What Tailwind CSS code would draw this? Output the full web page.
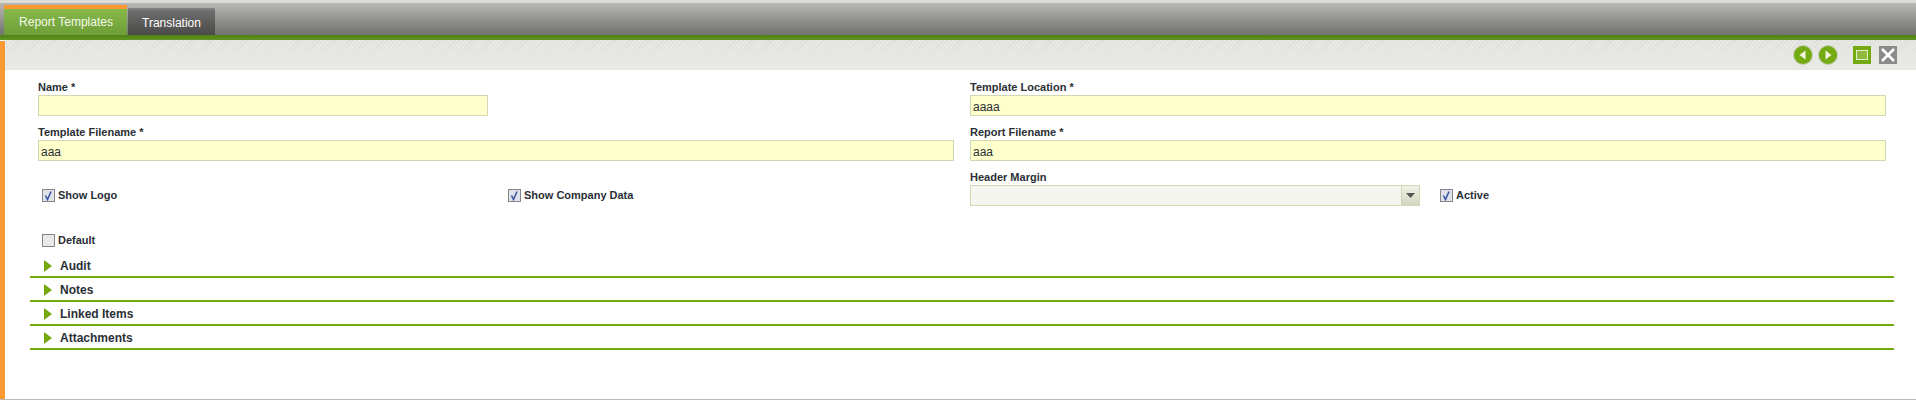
<!DOCTYPE html>
<html lang="en">
<head>
  <meta charset="UTF-8">
  <title>Report Templates</title>
  <script src="https://cdn.jsdelivr.net/npm/@tailwindcss/browser@4"></script>
</head>
<body class="bg-white h-[400px] overflow-hidden font-['Liberation_Sans',Arial,sans-serif] text-[#2a2f36]">

  <!-- tab bar -->
  <div class="h-[3px] bg-[#dcdcd4]"></div>
  <div class="h-[32px] pl-1 flex items-end gap-px bg-gradient-to-b from-[#b8b7b3] to-[#727270]">
    <div class="h-[30px] w-[123px] border-t-4 border-[#fb9a33] bg-[#7cb042] bg-gradient-to-b from-[#86b84a] to-[#6e9f38] text-[#f4f9e8] text-xs flex items-center justify-center pb-px pl-px">Report Templates</div>
    <div class="h-[27px] w-[87px] border-t-2 border-[#808080] bg-gradient-to-b from-[#6e6e6c] to-[#4a4a48] text-white text-xs flex items-center justify-center">Translation</div>
  </div>
  <div class="h-[5px] bg-gradient-to-b from-[#4f8214] to-[#5f9620]"></div>

  <div class="flex h-[360px] border-b border-[#bbbbbb]">
    <div class="w-[5px] mt-px bg-[#fb9a33]"></div>
    <div class="flex-1 min-w-0">

      <!-- toolbar -->
      <div class="h-[30px] pr-[19px] flex items-center justify-end bg-[linear-gradient(to_bottom,transparent,#e8e9e4_70%),repeating-linear-gradient(135deg,#dbdbd7_0,#dbdbd7_1px,#e8e9e4_1px,#e8e9e4_3px)]">
        <svg class="w-5 h-5" viewBox="0 0 20 20"><circle cx="10" cy="10" r="10" fill="#c3cbb0"/><circle cx="10" cy="10" r="9" fill="#74ab12"/><path d="M12.500 5.500v9L6.500 10z" fill="#f1f6e4"/></svg>
        <svg class="w-5 h-5 ml-[5px]" viewBox="0 0 20 20"><circle cx="10" cy="10" r="10" fill="#c3cbb0"/><circle cx="10" cy="10" r="9" fill="#74ab12"/><path d="M7.500 5.500v9l6-4.500z" fill="#f1f6e4"/></svg>
        <svg class="w-[18px] h-[18px] ml-[15px]" viewBox="0 0 18 18"><rect width="18" height="18" fill="#74ab12"/><rect x="3.500" y="4.500" width="11" height="9" fill="#8fbb3d" stroke="#e3efc8" stroke-width="1"/></svg>
        <svg class="w-[18px] h-[18px] ml-2" viewBox="0 0 18 18"><rect width="18" height="18" fill="#8a8a8a"/><path d="M3 3l12 12M15 3L3 15" stroke="#fff" stroke-width="2.500"/></svg>
      </div>

      <!-- form -->
      <div class="pl-[33px] pt-[11px] grid grid-cols-[repeat(4,450px)] gap-x-4 auto-rows-[45px] text-[11px] font-bold">
        <div>
          <label class="block h-[14px] leading-[12px]">Name *</label>
          <input class="block w-full h-[21px] border border-[#d3d8b4] bg-[#ffffcc] px-[2px] pt-[2px] text-xs font-normal" value="">
        </div>
        <div></div>
        <div class="col-span-2">
          <label class="block h-[14px] leading-[12px]">Template Location *</label>
          <input class="block w-full h-[21px] border border-[#d3d8b4] bg-[#ffffcc] px-[2px] pt-[2px] text-xs font-normal" value="aaaa">
        </div>

        <div class="col-span-2">
          <label class="block h-[14px] leading-[12px]">Template Filename *</label>
          <input class="block w-full h-[21px] border border-[#d3d8b4] bg-[#ffffcc] px-[2px] pt-[2px] text-xs font-normal" value="aaa">
        </div>
        <div class="col-span-2">
          <label class="block h-[14px] leading-[12px]">Report Filename *</label>
          <input class="block w-full h-[21px] border border-[#d3d8b4] bg-[#ffffcc] px-[2px] pt-[2px] text-xs font-normal" value="aaa">
        </div>

        <div class="flex items-center pl-[4px] pt-[4px] gap-[3px]">
          <svg class="w-[13px] h-[13px]" viewBox="0 0 13 13"><rect x=".5" y=".5" width="12" height="12" fill="#dfe2ea" stroke="#858585"/><path d="M3.500 6.500l2 4 3.500-8" fill="none" stroke="#37509c" stroke-width="1.500"/></svg>
          <span>Show Logo</span>
        </div>
        <div class="flex items-center pl-[4px] pt-[4px] gap-[3px]">
          <svg class="w-[13px] h-[13px]" viewBox="0 0 13 13"><rect x=".5" y=".5" width="12" height="12" fill="#dfe2ea" stroke="#858585"/><path d="M3.500 6.500l2 4 3.500-8" fill="none" stroke="#37509c" stroke-width="1.500"/></svg>
          <span>Show Company Data</span>
        </div>
        <div>
          <label class="block h-[14px] leading-[12px]">Header Margin</label>
          <div class="flex h-[21px] border border-[#d3d8b4] bg-[#f4f6ef]">
            <div class="flex-1"></div>
            <div class="w-[18px] flex items-center justify-center border-l border-[#d3d8b4] bg-gradient-to-b from-[#f0f2e8] to-[#d2d7c0]">
              <svg class="w-[9px] h-[5px]" viewBox="0 0 9 5"><path d="M0 0h9L4.500 5z" fill="#555"/></svg>
            </div>
          </div>
        </div>
        <div class="flex items-center pl-[4px] pt-[4px] gap-[3px]">
          <svg class="w-[13px] h-[13px]" viewBox="0 0 13 13"><rect x=".5" y=".5" width="12" height="12" fill="#dfe2ea" stroke="#858585"/><path d="M3.500 6.500l2 4 3.500-8" fill="none" stroke="#37509c" stroke-width="1.500"/></svg>
          <span>Active</span>
        </div>

        <div class="flex items-center pl-[4px] pt-[4px] gap-[3px]">
          <svg class="w-[13px] h-[13px]" viewBox="0 0 13 13"><rect x=".5" y=".5" width="12" height="12" fill="#e8e8e8" stroke="#858585"/></svg>
          <span>Default</span>
        </div>
      </div>

      <!-- collapsed sections -->
      <div class="ml-[25px] mr-[22px] -mt-[7px] text-xs font-bold">
        <div class="h-[24px] border-b-2 border-[#74a80f] flex items-center pl-[14px]">
          <svg class="w-[8px] h-[12px] mt-[2px]" viewBox="0 0 8 12"><path d="M0 0l8 6-8 6z" fill="#74a80f"/></svg><span class="ml-[8px] mt-[2px]">Audit</span>
        </div>
        <div class="h-[24px] border-b-2 border-[#74a80f] flex items-center pl-[14px]">
          <svg class="w-[8px] h-[12px] mt-[2px]" viewBox="0 0 8 12"><path d="M0 0l8 6-8 6z" fill="#74a80f"/></svg><span class="ml-[8px] mt-[2px]">Notes</span>
        </div>
        <div class="h-[24px] border-b-2 border-[#74a80f] flex items-center pl-[14px]">
          <svg class="w-[8px] h-[12px] mt-[2px]" viewBox="0 0 8 12"><path d="M0 0l8 6-8 6z" fill="#74a80f"/></svg><span class="ml-[8px] mt-[2px]">Linked Items</span>
        </div>
        <div class="h-[24px] border-b-2 border-[#74a80f] flex items-center pl-[14px]">
          <svg class="w-[8px] h-[12px] mt-[2px]" viewBox="0 0 8 12"><path d="M0 0l8 6-8 6z" fill="#74a80f"/></svg><span class="ml-[8px] mt-[2px]">Attachments</span>
        </div>
      </div>
    </div>
  </div>

</body>
</html>
